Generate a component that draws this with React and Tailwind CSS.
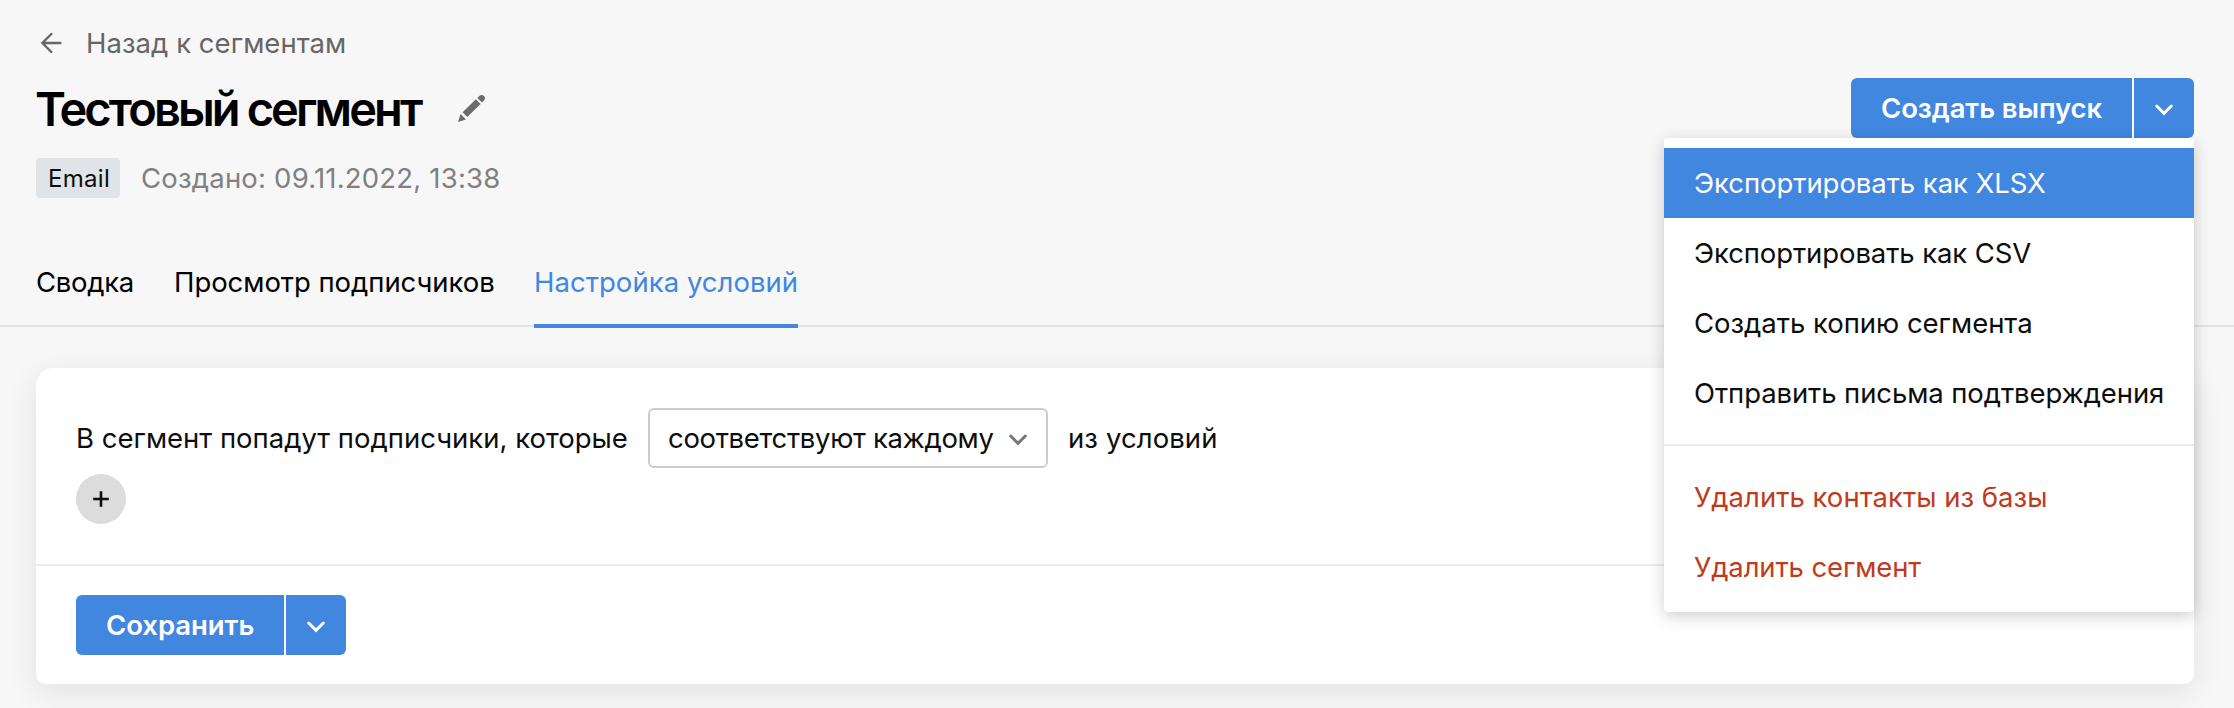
import React from "react";

function Chevron({ className }) {
  return (
    <svg className={className} width="20" height="14" viewBox="0 0 20 14" fill="none" stroke="currentColor" strokeWidth="3" strokeLinecap="round" strokeLinejoin="miter">
      <path d="M2.7 3L10 10.3L17.3 3" />
    </svg>
  );
}

function ArrowLeft() {
  return (
    <svg className="-ml-px" width="24" height="24" viewBox="0 0 24 24" fill="none" stroke="currentColor" strokeWidth="2.4" strokeLinecap="round">
      <path d="M12.4 3L3.4 12L12.4 21M3.4 12H21.4" />
    </svg>
  );
}

function Pencil() {
  return (
    <svg width="30" height="30" viewBox="0 0 30 30" fill="currentColor">
      <path d="M1 29L3.6 21L9 26.4Z" />
      <path d="M5.6 19.2L18.9 6.2L23.6 10.9L10.2 24Z" />
      <path d="M20.4 4.9L22.3 3C23.5 1.8 25.6 1.7 27 3C28.3 4.3 28.3 6.4 27 7.6L25 9.5Z" />
    </svg>
  );
}

function SplitButton({ label, labelClass }) {
  return (
    <div className="flex h-[60px] gap-[2px] overflow-hidden rounded-[6px] bg-white font-semibold text-white">
      <button className={`bg-[#4186df] text-left whitespace-nowrap ${labelClass}`}>{label}</button>
      <button className="flex w-[60px] items-center justify-center bg-[#4186df]">
        <Chevron className="mt-1" />
      </button>
    </div>
  );
}

function MenuItem({ label, className }) {
  return <div className={`flex h-[70px] items-center px-[30px] whitespace-nowrap ${className}`}>{label}</div>;
}

export default function App() {
  return (
    <div className="h-[708px] w-[2234px] overflow-hidden bg-[#f7f7f7] pt-7 font-['Inter',sans-serif] text-[27.5px] leading-[30px] tracking-[-0.03px] text-[#0d0d0d]">
      <header className="px-[36px] pr-[40px]">
        <div className="flex h-[30px] items-center pl-1 tracking-[0.04px] text-[#666]">
          <ArrowLeft />
          <span className="ml-[23px]">Назад к сегментам</span>
        </div>

        <div className="mt-5 flex h-[60px] items-center justify-between">
          <div className="flex items-center text-[#6b6b6b]">
            <h1 className="-ml-px w-[422px] pt-[2px] text-[47px] leading-[60px] font-semibold tracking-[-2.9px] whitespace-nowrap text-black">Тестовый сегмент</h1>
            <Pencil />
          </div>
          <div className="relative">
            <SplitButton label="Создать выпуск" labelClass="w-[281px] pl-[30px] tracking-[-0.1px]" />
            <div className="absolute top-[60px] right-0 z-10 h-[474px] w-[530px] rounded-[4px] bg-white pt-[10px] shadow-[0_4px_16px_rgba(0,0,0,0.2)]">
              <MenuItem label="Экспортировать как XLSX" className="bg-[#4186df] tracking-[-0.06px] text-white" />
              <MenuItem label="Экспортировать как CSV" className="tracking-[-0.1px]" />
              <MenuItem label="Создать копию сегмента" className="" />
              <MenuItem label="Отправить письма подтверждения" className="tracking-[-0.1px]" />
              <div className="mt-4 mb-4 h-[2px] bg-[#ebebeb]" />
              <MenuItem label="Удалить контакты из базы" className="tracking-[0.02px] text-[#c03a1c]" />
              <MenuItem label="Удалить сегмент" className="tracking-[-0.12px] text-[#c03a1c]" />
            </div>
          </div>
        </div>

        <div className="mt-5 flex h-[40px] items-center">
          <span className="flex h-[40px] w-[84px] items-center rounded-[4px] bg-[#e0e4e8] pt-[2px] pl-[12px] text-[24px] tracking-[0.3px]">Email</span>
          <span className="ml-[21px] tracking-[0.2px] text-[#808080]">Создано: 09.11.2022, 13:38</span>
        </div>
      </header>

      <nav className="mt-[40px] flex h-[89px] items-stretch border-b-2 border-[#e2e2e2] pl-[36px] whitespace-nowrap text-black">
        <div className="flex w-[138px] items-center pt-px tracking-[-0.3px]">Сводка</div>
        <div className="flex w-[360px] items-center pt-px tracking-[-0.05px]">Просмотр подписчиков</div>
        <div className="relative flex w-[264px] items-center pt-px tracking-[0.04px] text-[#4186df]">
          Настройка условий
          <span className="absolute inset-x-0 -bottom-[3px] h-1 bg-[#4186df]" />
        </div>
      </nav>

      <main className="mt-[41px] mr-[40px] ml-[36px] h-[316px] rounded-t-[18px] rounded-b-[10px] bg-white shadow-[0_8px_32px_rgba(0,0,0,0.09)]">
        <section className="h-[198px] border-b-2 border-[#ebebeb] px-[40px] pt-[40px]">
          <div className="flex h-[60px] items-center whitespace-nowrap">
            <span className="w-[572px] tracking-[0px]">В сегмент попадут подписчики, которые</span>
            <div className="flex h-[60px] w-[400px] items-center justify-between rounded-[6px] border-2 border-[#ccc] px-[18px] tracking-[-0.33px]">
              <span>соответствуют каждому</span>
              <Chevron className="mt-1 text-[#777]" />
            </div>
            <span className="ml-[20px] tracking-[0.1px]">из условий</span>
          </div>
          <button className="mt-[6px] flex h-[50px] w-[50px] items-center justify-center rounded-full bg-[#dcdcdc]">
            <svg width="16" height="16" viewBox="0 0 16 16" stroke="currentColor" strokeWidth="2.6">
              <path d="M8 0.2V15.8M0.2 8H15.8" />
            </svg>
          </button>
        </section>
        <footer className="flex px-[40px] pt-[29px]">
          <SplitButton label="Сохранить" labelClass="w-[208px] pl-[30px] tracking-[-0.05px]" />
        </footer>
      </main>
    </div>
  );
}
